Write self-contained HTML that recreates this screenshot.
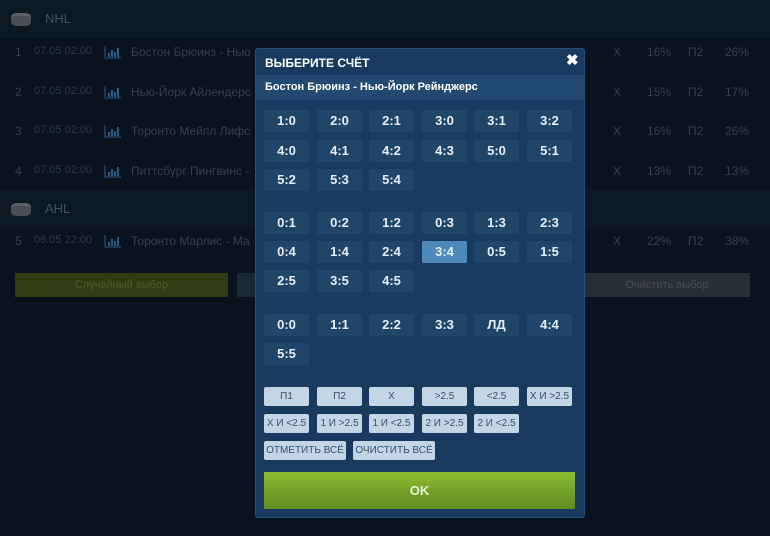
<!DOCTYPE html>
<html><head><meta charset="utf-8"><style>
*{margin:0;padding:0;box-sizing:border-box}
body{width:770px;height:536px;background:#09131d;font-family:"Liberation Sans",sans-serif;position:relative;overflow:hidden;color:#36414c}
.abs{position:absolute}
.lg{left:0;width:770px;height:38px;background:#0c1822}
.puck{width:20px;height:13px;border-radius:6px/4px;background:#4a4f55;border-top:3px solid #5c6168}
.row{left:0;width:770px;font-size:12px;height:20px}
.row span{position:absolute;top:0}
.row svg{position:absolute;left:104px;top:0}
.m{left:255px;top:48px;width:330px;height:470px;background:#173a5e;border:1px solid #24507a;border-radius:3px}
.b{position:absolute;width:45px;height:22px;background:#1f4569;color:#e6eef6;font-size:13px;font-weight:bold;text-align:center;line-height:22px;border-radius:2px}
.b.s{background:#4c88ba}
.l{position:absolute;height:19px;background:#c4d6e6;color:#34506c;font-size:10px;text-align:center;line-height:19px;border-radius:2px}
</style></head><body>
<div class="abs lg" style="top:0"></div>
<div class="abs puck" style="left:11px;top:13px"></div>
<div class="abs" style="left:45px;top:11px;font-size:13px;color:#45525f">NHL</div>
<div class="abs lg" style="top:190px"></div>
<div class="abs puck" style="left:11px;top:203px"></div>
<div class="abs" style="left:45px;top:201px;font-size:13px;color:#45525f">AHL</div>

<div class="abs row" style="top:45px"><span style="left:15px">1</span><span style="left:34px;font-size:11px;color:#2b3a49">07.05 02:00</span><svg width="18" height="14"><path d="M1 1V13H17" stroke="#2a5a86" fill="none"/><path d="M5 8v4M8 5v7M11 7v5M14 3v9" stroke="#2a5a86" stroke-width="2"/></svg><span style="left:131px">Бостон Брюинз - Нью</span><span style="left:613px">X</span><span style="left:647px">16%</span><span style="left:688px">П2</span><span style="left:725px">26%</span></div>
<div class="abs row" style="top:85px"><span style="left:15px">2</span><span style="left:34px;font-size:11px;color:#2b3a49">07.05 02:00</span><svg width="18" height="14"><path d="M1 1V13H17" stroke="#2a5a86" fill="none"/><path d="M5 8v4M8 5v7M11 7v5M14 3v9" stroke="#2a5a86" stroke-width="2"/></svg><span style="left:131px">Нью-Йорк Айлендерс</span><span style="left:613px">X</span><span style="left:647px">15%</span><span style="left:688px">П2</span><span style="left:725px">17%</span></div>
<div class="abs row" style="top:124px"><span style="left:15px">3</span><span style="left:34px;font-size:11px;color:#2b3a49">07.05 02:00</span><svg width="18" height="14"><path d="M1 1V13H17" stroke="#2a5a86" fill="none"/><path d="M5 8v4M8 5v7M11 7v5M14 3v9" stroke="#2a5a86" stroke-width="2"/></svg><span style="left:131px">Торонто Мейпл Лифс</span><span style="left:613px">X</span><span style="left:647px">16%</span><span style="left:688px">П2</span><span style="left:725px">26%</span></div>
<div class="abs row" style="top:164px"><span style="left:15px">4</span><span style="left:34px;font-size:11px;color:#2b3a49">07.05 02:00</span><svg width="18" height="14"><path d="M1 1V13H17" stroke="#2a5a86" fill="none"/><path d="M5 8v4M8 5v7M11 7v5M14 3v9" stroke="#2a5a86" stroke-width="2"/></svg><span style="left:131px">Питтсбург Пингвинс -</span><span style="left:613px">X</span><span style="left:647px">13%</span><span style="left:688px">П2</span><span style="left:725px">13%</span></div>
<div class="abs row" style="top:234px"><span style="left:15px">5</span><span style="left:34px;font-size:11px;color:#2b3a49">06.05 22:00</span><svg width="18" height="14"><path d="M1 1V13H17" stroke="#2a5a86" fill="none"/><path d="M5 8v4M8 5v7M11 7v5M14 3v9" stroke="#2a5a86" stroke-width="2"/></svg><span style="left:131px">Торонто Марлис - Ма</span><span style="left:613px">X</span><span style="left:647px">22%</span><span style="left:688px">П2</span><span style="left:725px">38%</span></div>

<div class="abs" style="left:15px;top:273px;width:213px;height:24px;background:#323c12;color:#525c26;font-size:11px;text-align:center;line-height:24px">Случайный выбор</div>
<div class="abs" style="left:237px;top:273px;width:30px;height:24px;background:#1b2834"></div>
<div class="abs" style="left:584px;top:273px;width:166px;height:24px;background:#282e35;color:#464d55;font-size:11px;text-align:center;line-height:24px">Очистить выбор</div>

<div class="abs m">
<div class="abs" style="left:9px;top:7px;color:#fff;font-size:12px;font-weight:bold">ВЫБЕРИТЕ СЧЁТ</div>
<div class="abs" style="left:310px;top:2px;color:#fff;font-size:15px;font-weight:bold">✖</div>
<div class="abs" style="left:0;top:26px;width:328px;height:25px;background:#224a71"></div>
<div class="abs" style="left:9px;top:32px;color:#fff;font-size:11px;font-weight:bold">Бостон Брюинз - Нью-Йорк Рейнджерс</div>

<div class="b" style="left:8px;top:61px">1:0</div><div class="b" style="left:61px;top:61px">2:0</div><div class="b" style="left:113px;top:61px">2:1</div><div class="b" style="left:166px;top:61px">3:0</div><div class="b" style="left:218px;top:61px">3:1</div><div class="b" style="left:271px;top:61px">3:2</div>
<div class="b" style="left:8px;top:91px">4:0</div><div class="b" style="left:61px;top:91px">4:1</div><div class="b" style="left:113px;top:91px">4:2</div><div class="b" style="left:166px;top:91px">4:3</div><div class="b" style="left:218px;top:91px">5:0</div><div class="b" style="left:271px;top:91px">5:1</div>
<div class="b" style="left:8px;top:120px">5:2</div><div class="b" style="left:61px;top:120px">5:3</div><div class="b" style="left:113px;top:120px">5:4</div>

<div class="b" style="left:8px;top:163px">0:1</div><div class="b" style="left:61px;top:163px">0:2</div><div class="b" style="left:113px;top:163px">1:2</div><div class="b" style="left:166px;top:163px">0:3</div><div class="b" style="left:218px;top:163px">1:3</div><div class="b" style="left:271px;top:163px">2:3</div>
<div class="b" style="left:8px;top:192px">0:4</div><div class="b" style="left:61px;top:192px">1:4</div><div class="b" style="left:113px;top:192px">2:4</div><div class="b s" style="left:166px;top:192px">3:4</div><div class="b" style="left:218px;top:192px">0:5</div><div class="b" style="left:271px;top:192px">1:5</div>
<div class="b" style="left:8px;top:221px">2:5</div><div class="b" style="left:61px;top:221px">3:5</div><div class="b" style="left:113px;top:221px">4:5</div>

<div class="b" style="left:8px;top:265px">0:0</div><div class="b" style="left:61px;top:265px">1:1</div><div class="b" style="left:113px;top:265px">2:2</div><div class="b" style="left:166px;top:265px">3:3</div><div class="b" style="left:218px;top:265px">ЛД</div><div class="b" style="left:271px;top:265px">4:4</div>
<div class="b" style="left:8px;top:294px">5:5</div>

<div class="l" style="left:8px;top:338px;width:45px">П1</div><div class="l" style="left:61px;top:338px;width:45px">П2</div><div class="l" style="left:113px;top:338px;width:45px">X</div><div class="l" style="left:166px;top:338px;width:45px">&gt;2.5</div><div class="l" style="left:218px;top:338px;width:45px">&lt;2.5</div><div class="l" style="left:271px;top:338px;width:45px">X И &gt;2.5</div>
<div class="l" style="left:8px;top:365px;width:45px">X И &lt;2.5</div><div class="l" style="left:61px;top:365px;width:45px">1 И &gt;2.5</div><div class="l" style="left:113px;top:365px;width:45px">1 И &lt;2.5</div><div class="l" style="left:166px;top:365px;width:45px">2 И &gt;2.5</div><div class="l" style="left:218px;top:365px;width:45px">2 И &lt;2.5</div>
<div class="l" style="left:8px;top:392px;width:82px">ОТМЕТИТЬ ВСЁ</div><div class="l" style="left:97px;top:392px;width:82px">ОЧИСТИТЬ ВСЁ</div>

<div class="abs" style="left:8px;top:423px;width:311px;height:37px;background:linear-gradient(#8dbb32,#5f8c1f);color:#eaf5d5;font-size:13px;font-weight:bold;text-align:center;line-height:37px">OK</div>
</div>
</body></html>
